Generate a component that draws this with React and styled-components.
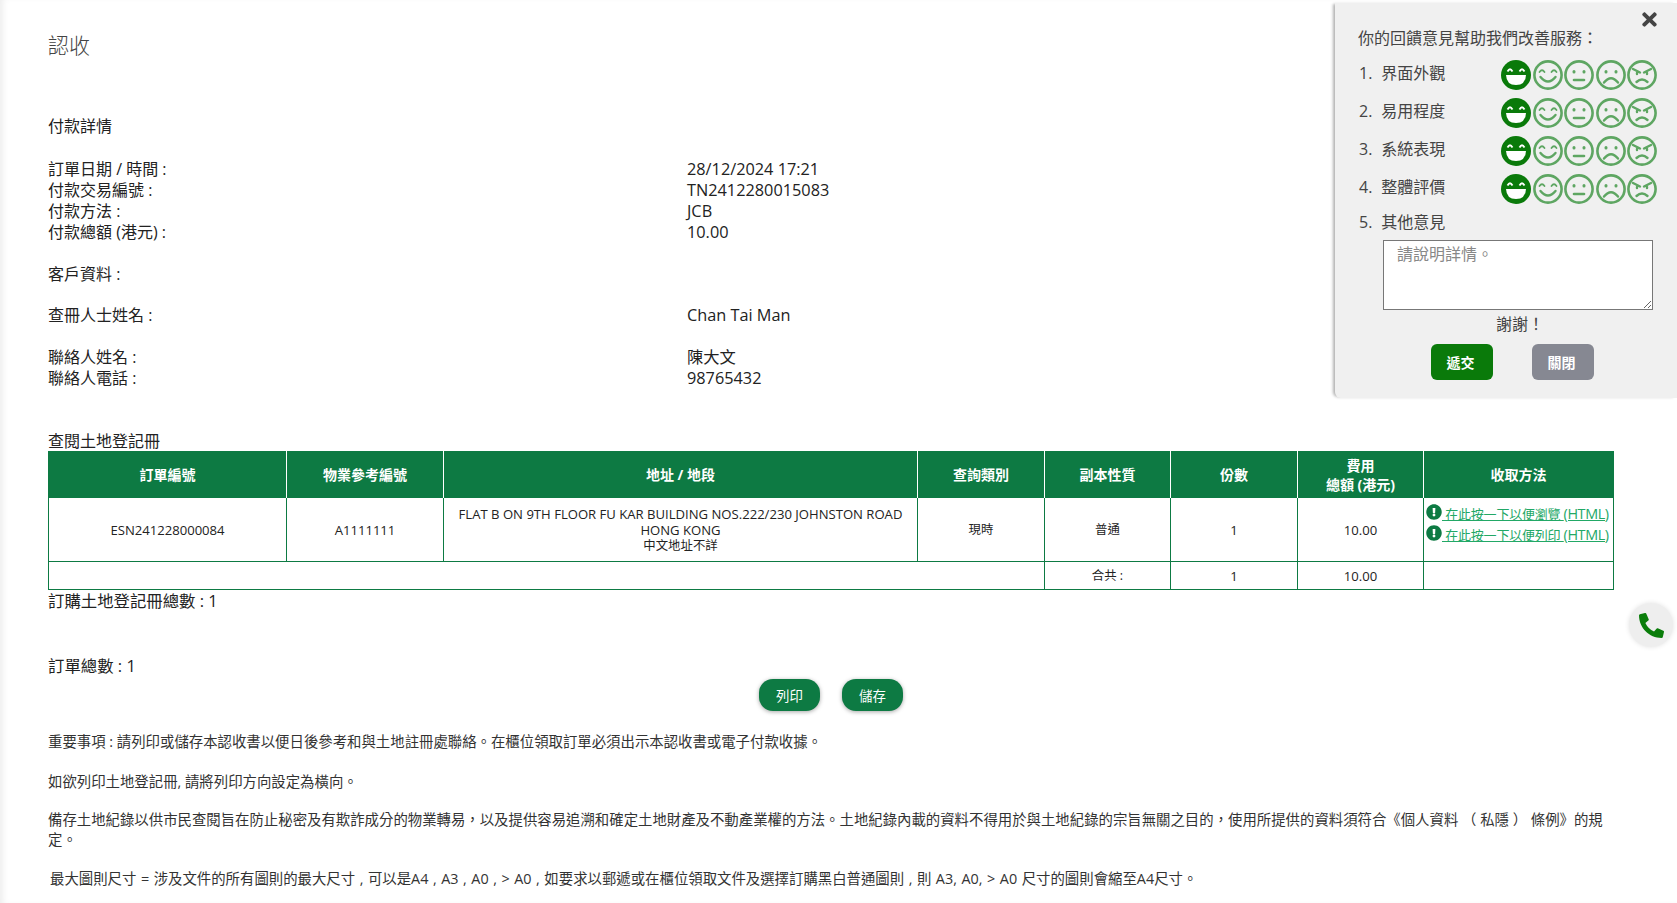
import React from "react";
import styled, { createGlobalStyle } from "styled-components";
import { FaExclamationCircle, FaPhoneAlt, FaTimes } from "react-icons/fa";

const GREEN = "#0d7a43";
const FONT = `"Noto Sans CJK TC", "Open Sans", sans-serif`;

const GlobalStyle = createGlobalStyle`
	html, body {
		margin: 0;
		padding: 0;
		background: #fff;
		overflow: hidden;
	}
	body {
		font-family: "Open Sans", "Noto Sans CJK TC", sans-serif;
		color: #222;
	}
`;

const Page = styled.div`
	width: 1677px;
	height: 903px;
	box-sizing: border-box;
	padding: 29px 64px 0 48px;
	position: relative;
	overflow: hidden;
	box-shadow: inset 6px 0 6px -3px #eee;
`;

const Title = styled.h1`
	margin: 0 0 55px;
	font-size: 21px;
	line-height: 32px;
	font-weight: 300;
	color: #444;
`;

const Section = styled.div`
	margin-bottom: ${props => props.gap || 21}px;
	font-size: 16px;
	line-height: 21px;
`;

const InfoRow = styled.div`
	display: grid;
	grid-template-columns: 639px 1fr;
`;

const Value = styled.span`
	font-size: 16.3px;
`;

const TableTitle = styled.div`
	font-size: 16px;
	line-height: 19px;
`;

const Table = styled.table`
	width: 1565px;
	border-collapse: collapse;
	table-layout: fixed;
	font-size: 13.1px;
	line-height: 16px;
`;

const Th = styled.th`
	background: ${GREEN};
	color: #fff;
	height: 45px;
	padding: 1px 0 0;
	font-size: 14px;
	font-weight: 700;
	line-height: 19px;
	border-left: 1px solid #fff;
	&:first-child {
		border-left: 1px solid ${GREEN};
	}
	&:last-child {
		border-right: 1px solid ${GREEN};
	}
`;

const Td = styled.td`
	border: 1px solid ${GREEN};
	text-align: center;
	padding: 0;
	height: ${props => props.h || 58}px;
	font-size: ${props => props.size || 13.1}px;
`;

const Small = styled.span`
	display: block;
	font-size: 12.4px;
`;

const LinkCell = styled(Td)`
	text-align: left;
	vertical-align: top;
	padding: 5px 0 0 2px;
`;

const LinkRow = styled.div`
	display: flex;
	align-items: center;
	white-space: nowrap;
	height: 21px;
	font-size: 13px;
	letter-spacing: -0.2px;
	svg {
		color: ${GREEN};
		font-size: 16px;
		flex: none;
		margin-bottom: 3px;
	}
	a {
		color: #22a866;
		text-decoration: underline;
		white-space: pre;
	}
	b {
		font-weight: 400;
		font-size: 14.4px;
		letter-spacing: -0.4px;
	}
`;

const Total = styled.div`
	font-size: 16.4px;
	line-height: 22px;
	margin-top: ${props => props.top || 0}px;
`;

const Actions = styled.div`
	display: flex;
	justify-content: center;
	gap: 22px;
	margin: 2px 0 0 1px;
`;

const PillButton = styled.button`
	width: 61px;
	height: 32px;
	border: none;
	border-radius: 14px;
	background: ${GREEN};
	color: #fff;
	font-family: ${FONT};
	font-size: 13.4px;
	box-shadow: 0 1px 4px rgba(0, 0, 0, 0.35);
`;

const Note = styled.p`
	margin: ${props => props.top || 0}px 0 0 ${props => props.left || 0}px;
	font-size: 14.4px;
	line-height: 20px;
	color: #333;
	word-spacing: ${props => props.$wordGap || 0}px;
`;

const Panel = styled.aside`
	position: absolute;
	top: 3px;
	right: 0;
	width: 342px;
	height: 395px;
	box-sizing: border-box;
	padding: 23px 20px 0 23px;
	background: #f0f0f0;
	border-bottom-left-radius: 6px;
	box-shadow: -3px 0 3px -1px rgba(0, 0, 0, 0.3);
	font-size: 16px;
	color: #444;
`;

const CloseIcon = styled(FaTimes)`
	position: absolute;
	top: 6px;
	right: 17px;
	font-size: 21px;
	color: #444;
`;

const PanelHeading = styled.div`
	line-height: 24px;
	margin-bottom: 6px;
`;

const RatingRow = styled.div`
	display: flex;
	align-items: center;
	justify-content: space-between;
	height: 38px;
	padding-left: 1px;
`;

const RowLabel = styled.div`
	display: flex;
	gap: 9px;
	line-height: 24px;
	margin-bottom: ${props => props.$bottom || 0}px;
`;

const CommentLabel = styled(RowLabel)`
	padding: 2px 0 0 1px;
`;

const Faces = styled.div`
	display: flex;
	gap: 1.4px;
`;

const CommentBox = styled.textarea`
	display: block;
	width: 270px;
	height: 70px;
	box-sizing: border-box;
	margin: 6px 0 0 25px;
	padding: 0 13px;
	border: 1px solid #777;
	border-radius: 0;
	background: #fff;
	font-family: ${FONT};
	font-size: 16px;
	line-height: 24px;
	&::placeholder {
		color: #888;
	}
`;

const Thanks = styled.div`
	text-align: center;
	line-height: 24px;
	margin: 2px 0 8px 25px;
`;

const PanelButtons = styled.div`
	display: flex;
	gap: 39px;
	padding-left: 73px;
`;

const PanelButton = styled.button`
	width: 62px;
	height: 36px;
	padding: 0 3px 0 0;
	border: none;
	border-radius: 6px;
	background: ${props => props.$bg};
	color: #fff;
	font-family: ${FONT};
	font-size: 14px;
	font-weight: 700;
`;

const PhoneButton = styled.div`
	position: absolute;
	top: 603px;
	right: 4px;
	width: 44px;
	height: 44px;
	border-radius: 50%;
	background: #eee;
	box-shadow: 0 0 5px rgba(0, 0, 0, 0.12);
	display: flex;
	align-items: center;
	justify-content: center;
	color: #0a7d0a;
	font-size: 25px;
`;

const Face = ({ mouth, brows, filled }) => {
	if (filled) {
		return (
			<svg width="30" height="30" viewBox="0 0 30 30">
				<circle cx="15" cy="15" r="15" fill="#0a7a0a" />
				<path d="M6.5 11.5 Q9 7 11.5 11.5 M18.5 11.5 Q21 7 23.5 11.5" fill="none" stroke="#fff" strokeWidth="1.8" />
				<path d="M5 15 H25 Q24.5 25 15 25 Q5.5 25 5 15 Z" fill="#fff" />
			</svg>
		);
	}
	return (
		<svg width="30" height="30" viewBox="0 0 30 30" fill="none" stroke="#5ea662" strokeWidth="2.6" strokeLinecap="round">
			<circle cx="15" cy="15" r="13.6" />
			{brows}
			{mouth}
		</svg>
	);
};

const eyes = <path d="M10 11.5 v0.5 M20 11.5 v0.5" strokeWidth="3" />;

const faceParts = [
	{ brows: <path d="M6.5 12 Q9 8.5 11.5 12 M18.5 12 Q21 8.5 23.5 12" strokeWidth="1.8" />, mouth: <path d="M7.5 17 Q15 26 22.5 17" strokeWidth="2.4" /> },
	{ brows: eyes, mouth: <path d="M10 20 H20" strokeWidth="2.6" /> },
	{ brows: eyes, mouth: <path d="M8 22.5 Q15 14 22 22.5" strokeWidth="2.4" /> },
	{
		brows: <path d="M6 9 L13 12.5 M24 9 L17 12.5 M10 13 v1 M20 13 v1" strokeWidth="2.4" />,
		mouth: <path d="M9.5 22 Q15 17 20.5 22" strokeWidth="2.4" />,
	},
];

const FaceSet = () => (
	<Faces>
		<Face filled />
		{faceParts.map((part, i) => (
			<Face key={i} brows={part.brows} mouth={part.mouth} />
		))}
	</Faces>
);

const ratings = ["界面外觀", "易用程度", "系統表現", "整體評價"];

const App = () => {
	return (
		<Page>
			<GlobalStyle />
			<Title>認收</Title>
			<Section gap={22}>付款詳情</Section>
			<Section>
				<InfoRow><span>訂單日期 / 時間 :</span><Value>28/12/2024 17:21</Value></InfoRow>
				<InfoRow><span>付款交易編號 :</span><Value>TN2412280015083</Value></InfoRow>
				<InfoRow><span>付款方法 :</span><Value>JCB</Value></InfoRow>
				<InfoRow><span>付款總額 (港元) :</span><Value>10.00</Value></InfoRow>
			</Section>
			<Section gap={20}>客戶資料 :</Section>
			<Section>
				<InfoRow><span>查冊人士姓名 :</span><Value>Chan Tai Man</Value></InfoRow>
			</Section>
			<Section gap={43}>
				<InfoRow><span>聯絡人姓名 :</span><Value>陳大文</Value></InfoRow>
				<InfoRow><span>聯絡人電話 :</span><Value>98765432</Value></InfoRow>
			</Section>
			<TableTitle>查閱土地登記冊</TableTitle>
			<Table>
				<colgroup>
					<col style={{ width: 238 }} />
					<col style={{ width: 157 }} />
					<col style={{ width: 474 }} />
					<col style={{ width: 127 }} />
					<col style={{ width: 126 }} />
					<col style={{ width: 127 }} />
					<col style={{ width: 126 }} />
					<col style={{ width: 190 }} />
				</colgroup>
				<thead>
					<tr>
						<Th>訂單編號</Th>
						<Th>物業參考編號</Th>
						<Th>地址 / 地段</Th>
						<Th>查詢類別</Th>
						<Th>副本性質</Th>
						<Th>份數</Th>
						<Th>費用<br />總額 (港元)</Th>
						<Th>收取方法</Th>
					</tr>
				</thead>
				<tbody>
					<tr>
						<Td>ESN241228000084</Td>
						<Td>A1111111</Td>
						<Td>
							FLAT B ON 9TH FLOOR FU KAR BUILDING NOS.222/230 JOHNSTON ROAD<br />
							HONG KONG
							<Small>中文地址不詳</Small>
						</Td>
						<Td size={12.4}>現時</Td>
						<Td size={12.4}>普通</Td>
						<Td>1</Td>
						<Td>10.00</Td>
						<LinkCell>
							<LinkRow><FaExclamationCircle /><a href="#view"> 在此按一下以便瀏覽 <b>(HTML)</b></a></LinkRow>
							<LinkRow><FaExclamationCircle /><a href="#print"> 在此按一下以便列印 <b>(HTML)</b></a></LinkRow>
						</LinkCell>
					</tr>
					<tr>
						<Td h={27} colSpan={4} />
						<Td h={27} size={12.4}>合共 :</Td>
						<Td h={27}>1</Td>
						<Td h={27}>10.00</Td>
						<Td h={27} />
					</tr>
				</tbody>
			</Table>
			<Total>訂購土地登記冊總數 : 1</Total>
			<Total top={43}>訂單總數 : 1</Total>
			<Actions>
				<PillButton>列印</PillButton>
				<PillButton>儲存</PillButton>
			</Actions>
			<Note top={21}>重要事項 : 請列印或儲存本認收書以便日後參考和與土地註冊處聯絡。在櫃位領取訂單必須出示本認收書或電子付款收據。</Note>
			<Note top={20}>如欲列印土地登記冊, 請將列印方向設定為橫向。</Note>
			<Note top={18}>備存土地紀錄以供市民查閱旨在防止秘密及有欺詐成分的物業轉易，以及提供容易追溯和確定土地財產及不動產業權的方法。土地紀錄內載的資料不得用於與土地紀錄的宗旨無關之目的，使用所提供的資料須符合《個人資料 （ 私隱 ） 條例》的規定。</Note>
			<Note top={19} left={2} $wordGap={0.8}>最大圖則尺寸 = 涉及文件的所有圖則的最大尺寸 , 可以是A4 , A3 , A0 , &gt; A0 , 如要求以郵遞或在櫃位領取文件及選擇訂購黑白普通圖則 , 則 A3, A0, &gt; A0 尺寸的圖則會縮至A4尺寸。</Note>

			<Panel>
				<CloseIcon />
				<PanelHeading>你的回饋意見幫助我們改善服務：</PanelHeading>
				{ratings.map((label, i) => (
					<RatingRow key={label}>
						<RowLabel $bottom={5}><span>{i + 1}.</span><span>{label}</span></RowLabel>
						<FaceSet />
					</RatingRow>
				))}
				<CommentLabel><span>5.</span><span>其他意見</span></CommentLabel>
				<CommentBox placeholder="請說明詳情。" />
				<Thanks>謝謝！</Thanks>
				<PanelButtons>
					<PanelButton $bg="#0a7a0a">遞交</PanelButton>
					<PanelButton $bg="#868892">關閉</PanelButton>
				</PanelButtons>
			</Panel>
			<PhoneButton><FaPhoneAlt /></PhoneButton>
		</Page>
	);
};

export default App;
